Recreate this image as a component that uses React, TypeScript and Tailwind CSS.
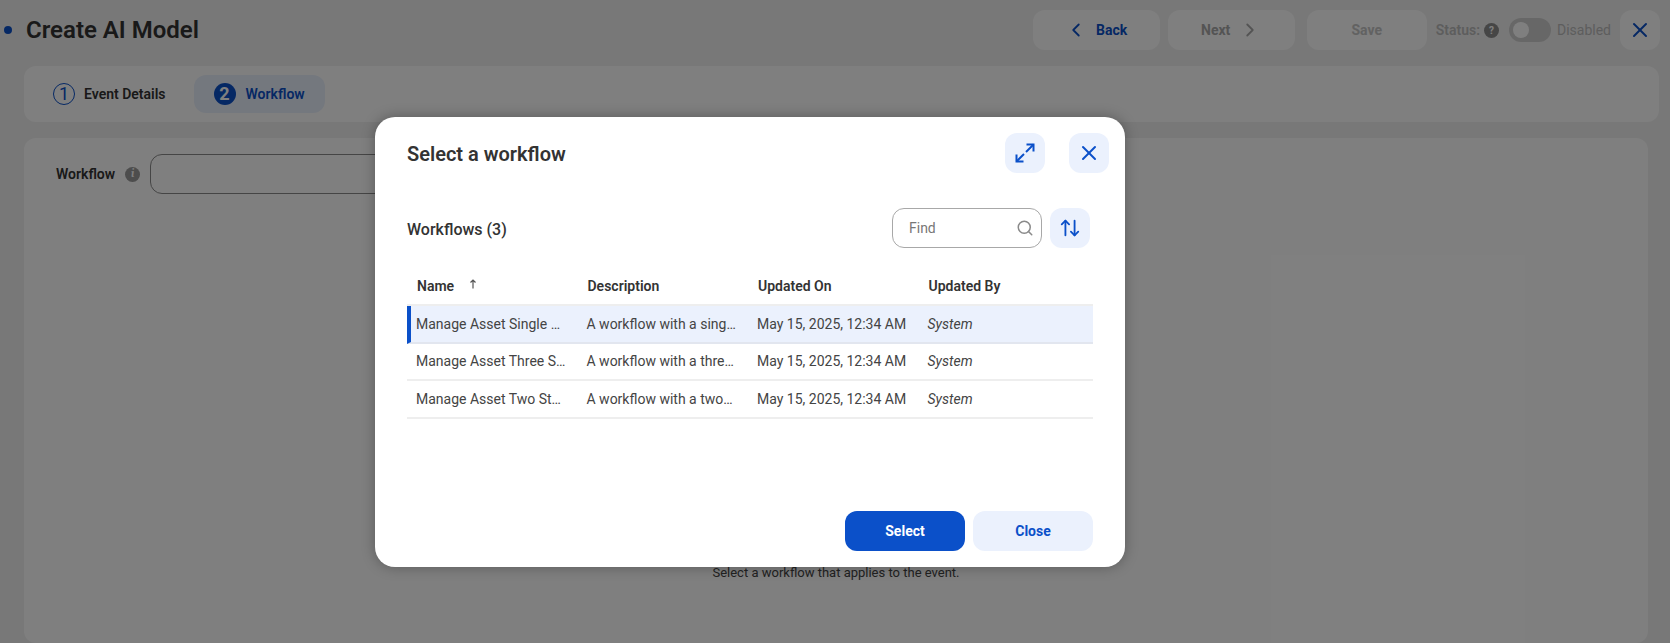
import { ArrowUpDown, ChevronLeft, ChevronRight, Search, X } from "lucide-react";

const ROWS = [
  {
    name: "Manage Asset Single Step Workflow",
    description: "A workflow with a single step approval",
    selected: true,
  },
  {
    name: "Manage Asset Three Step Workflow",
    description: "A workflow with a three step approval",
    selected: false,
  },
  {
    name: "Manage Asset Two Step Workflow",
    description: "A workflow with a two step approval",
    selected: false,
  },
];

const ExpandIcon = () => (
  <svg width="20" height="20" viewBox="0 0 20 20" fill="none" stroke="currentColor" strokeWidth={2}>
    <path d="M11.5 1.5h7v7" />
    <path d="M18.5 1.5l-7.5 7.5" />
    <path d="M8.5 18.5h-7v-7" />
    <path d="M1.5 18.5L9 11" />
  </svg>
);

// ── Header bar behind the dialog ──
const PageHeader = () => (
  <div className="flex h-[66px] items-start pt-[10px] pr-[10px]">
    <div className="flex h-10 items-center">
      <span className="ml-1 h-2 w-2 rounded-full bg-[#0b50c9]" />
      <h1 className="ml-[14px] text-2xl leading-none font-semibold text-[#333]">Create AI Model</h1>
    </div>
    <div className="ml-auto flex h-10 items-center">
      <button className="flex h-10 w-[127px] items-center justify-center gap-[9px] rounded-xl bg-white text-sm font-bold text-[#0b50c9]">
        <ChevronLeft size={22} />
        Back
      </button>
      <button className="ml-2 flex h-10 w-[127px] items-center justify-center gap-[9px] rounded-xl bg-white text-sm font-bold text-[#a8a8a8]">
        Next
        <ChevronRight size={22} />
      </button>
      <button className="ml-3 h-10 w-[120px] rounded-xl bg-white text-sm font-bold text-[#c4c4c4]">Save</button>
      <span className="ml-[9px] text-sm font-semibold text-[#bbb]">Status:</span>
      <span className="ml-1 flex h-[15px] w-[15px] items-center justify-center rounded-full bg-[#8c8c8c] text-[10px] font-bold text-white">
        ?
      </span>
      <span className="ml-[10px] flex h-6 w-[42px] items-center rounded-full bg-[#cfcfcf] pl-1">
        <span className="h-4 w-4 rounded-full bg-white" />
      </span>
      <span className="ml-[6px] text-sm text-[#bbb]">Disabled</span>
      <button className="ml-[9px] flex h-10 w-10 items-center justify-center rounded-xl bg-white text-[#0b50c9]">
        <X size={24} />
      </button>
    </div>
  </div>
);

const Stepper = () => (
  <div className="mr-[11px] ml-6 flex h-14 items-center rounded-xl bg-white pl-[29px]">
    <div className="flex items-center gap-[9px]">
      <span className="flex h-[22px] w-[22px] items-center justify-center rounded-full border border-[#0b50c9] text-lg leading-none text-[#0b50c9]">
        1
      </span>
      <span className="text-sm font-semibold text-[#333]">Event Details</span>
    </div>
    <div className="ml-7 flex h-[38px] w-[131px] items-center gap-[10px] rounded-xl bg-[#e9f0fd] pl-5">
      <span className="flex h-[22px] w-[22px] items-center justify-center rounded-full bg-[#0b50c9] text-lg leading-none font-bold text-white">
        2
      </span>
      <span className="text-sm font-semibold text-[#0b50c9]">Workflow</span>
    </div>
  </div>
);

const WorkflowPanel = () => (
  <div className="mt-4 mr-[22px] ml-6 flex h-[505px] flex-col rounded-xl bg-white">
    <div className="mt-4 flex items-center pl-8">
      <span className="text-sm font-semibold text-[#333]">Workflow</span>
      <span className="ml-[10px] flex h-[15px] w-[15px] items-center justify-center rounded-full bg-[#9a9a9a] font-serif text-[11px] font-bold text-white italic">
        i
      </span>
      <div className="ml-[10px] h-10 w-[560px] rounded-xl border border-[#8a8a8a]" />
    </div>
    <p className="mt-[369px] text-center text-[13px] text-[#444]">Select a workflow that applies to the event.</p>
  </div>
);

const WorkflowDialog = () => (
  <div className="absolute top-[117px] left-[375px] flex h-[450px] w-[750px] flex-col rounded-[20px] bg-white shadow-[0_0_14px_rgba(0,0,0,0.3)]">
    <div className="flex items-start pt-4 pr-4 pl-8">
      <h2 className="mt-[10px] text-xl leading-[22px] font-semibold text-[#333]">Select a workflow</h2>
      <button className="ml-auto flex h-10 w-10 items-center justify-center rounded-xl bg-[#ebf1fd] text-[#0b50c9]">
        <ExpandIcon />
      </button>
      <button className="ml-6 flex h-10 w-10 items-center justify-center rounded-xl bg-[#ebf1fd] text-[#0b50c9]">
        <X size={24} />
      </button>
    </div>

    <div className="mt-[35px] flex items-center pr-[35px] pl-8">
      <span className="pt-1 text-base font-medium text-[#333]">Workflows (3)</span>
      <div className="ml-auto flex h-10 w-[150px] items-center rounded-xl border border-[#a8a8a8] pr-[7px] pl-[16px]">
        <span className="text-sm text-[#777]">Find</span>
        <Search size={18} className="ml-auto text-[#8a8a8a]" />
      </div>
      <button className="ml-2 flex h-10 w-10 items-center justify-center rounded-xl bg-[#ebf1fd] text-[#0b50c9]">
        <ArrowUpDown size={22} />
      </button>
    </div>

    <div className="mx-8 mt-[22px]">
      <div className="grid h-9 grid-cols-[170.5px_170.5px_170.5px_1fr] items-center border-b-2 border-[#eeeeee] pb-[2px] text-sm font-semibold text-[#333]">
        <span className="flex items-center pl-[10px]">
          Name
          <svg width="10" height="10" viewBox="0 0 10 10" className="mb-1 ml-[14px]" fill="none" stroke="#555" strokeWidth={1.2}>
            <path d="M5 9.5V1M2.5 3.5L5 1l2.5 2.5" />
          </svg>
        </span>
        <span className="pl-[10px]">Description</span>
        <span className="pl-[10px]">Updated On</span>
        <span className="pl-[10px]">Updated By</span>
      </div>
      {ROWS.map((row) => (
        <div
          key={row.name}
          className={`grid h-[37.5px] items-center border-b-2 text-sm text-[#444] ${
            row.selected
              ? "grid-cols-[166.5px_170.5px_170.5px_1fr] border-[#e2e6ef] border-l-4 border-l-[#0b50c9] bg-[#ebf1fd]"
              : "grid-cols-[170.5px_170.5px_170.5px_1fr] border-[#eeeeee]"
          }`}
        >
          <span className={`truncate pr-3 ${row.selected ? "pl-[5px]" : "pl-[9px]"}`}>{row.name}</span>
          <span className="truncate pr-3 pl-[9px]">{row.description}</span>
          <span className="pl-[9px] whitespace-nowrap">May 15, 2025, 12:34 AM</span>
          <span className="pl-[9px] italic">System</span>
        </div>
      ))}
    </div>

    <div className="mt-auto flex justify-end gap-2 pr-8 pb-4">
      <button className="h-10 w-[120px] rounded-xl bg-[#0b50c9] pb-[1px] text-sm font-bold text-white">Select</button>
      <button className="h-10 w-[120px] rounded-xl bg-[#ebf1fd] pb-[1px] text-sm font-bold text-[#0b50c9]">Close</button>
    </div>
  </div>
);

export default function App() {
  return (
    <div className="relative h-[643px] w-[1670px] overflow-hidden bg-[#f1f1f1] font-['Roboto',sans-serif]">
      <PageHeader />
      <Stepper />
      <WorkflowPanel />
      {/* Backdrop */}
      <div className="absolute inset-0 bg-black/50" />
      <WorkflowDialog />
    </div>
  );
}
